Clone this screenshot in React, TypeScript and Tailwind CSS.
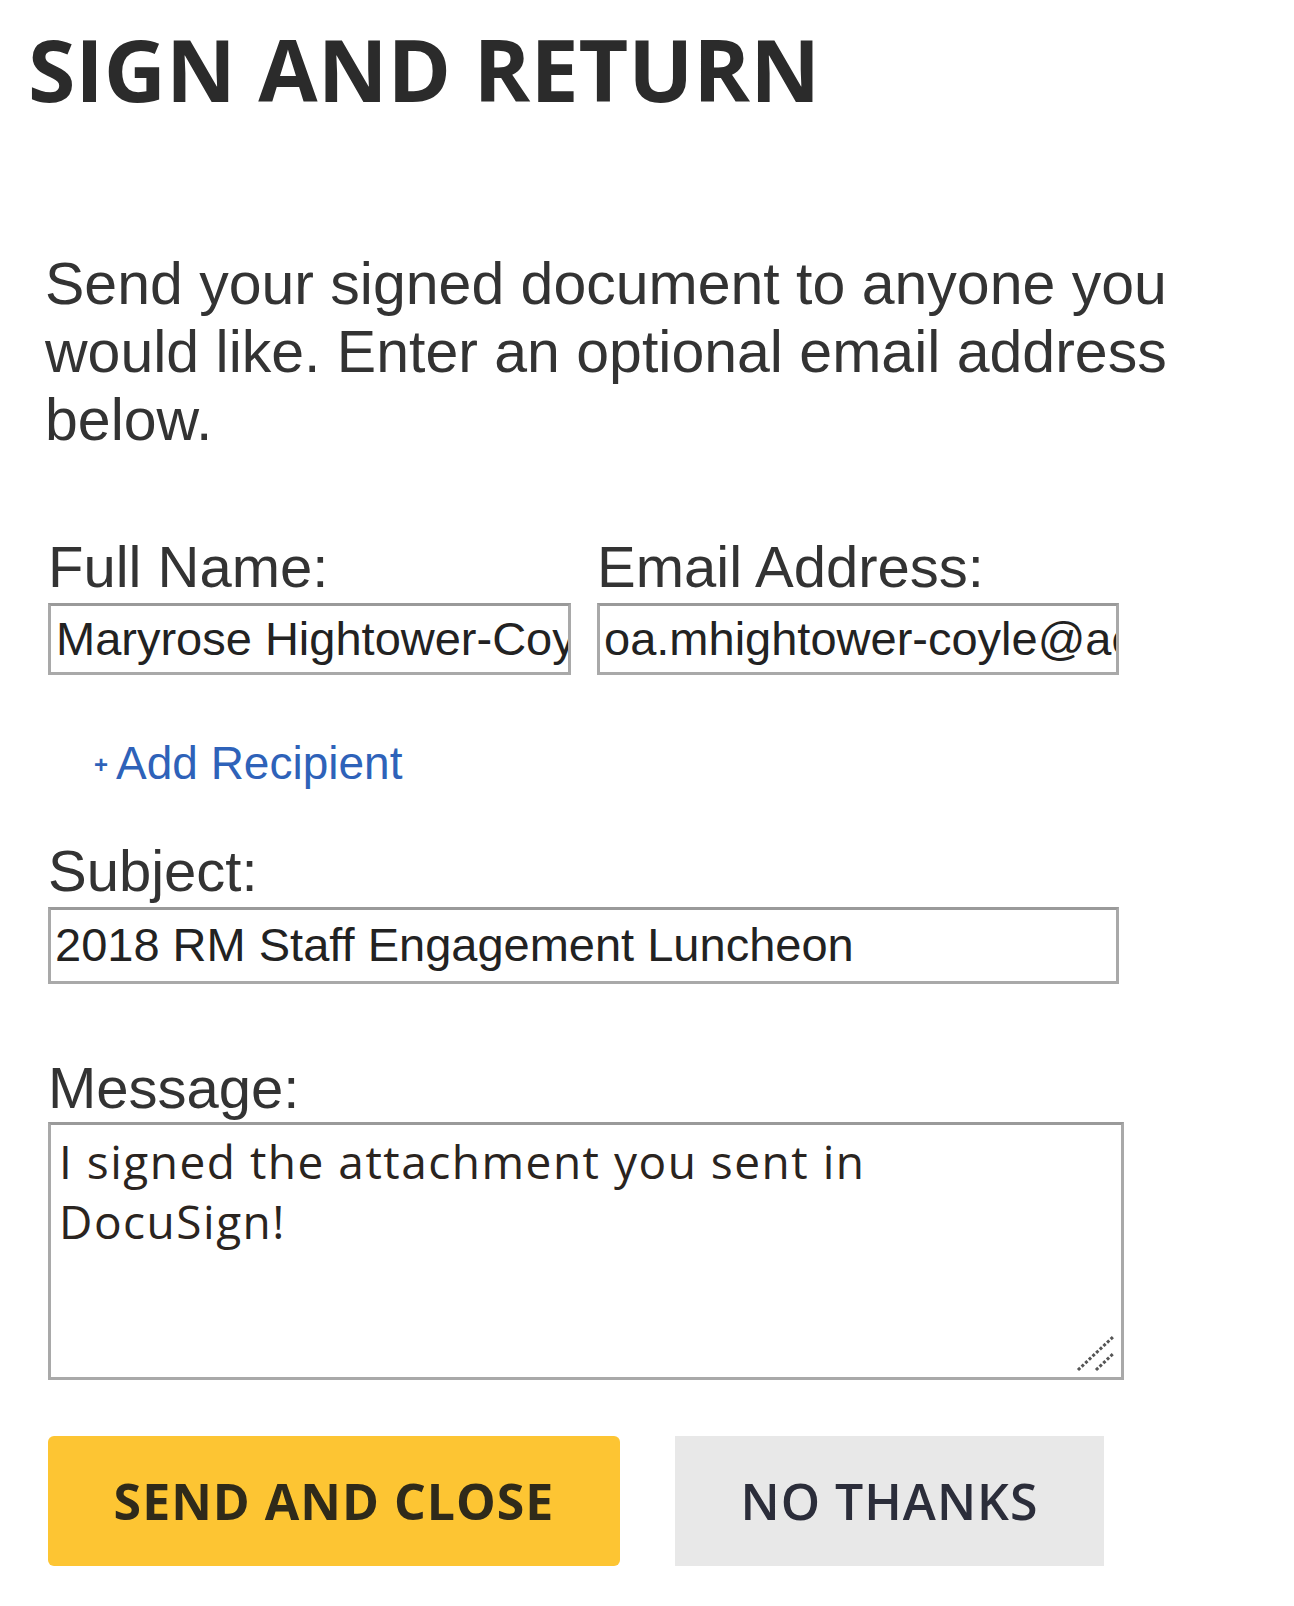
import React from "react";

const label = "text-[58px] leading-[64px] text-[#333333] font-['Liberation_Sans',Arial,sans-serif]";
const field =
  "border-[3px] border-[#a9a9a9] border-t-[#9a9a9a] bg-white overflow-hidden whitespace-nowrap text-[47px] text-[#222] font-['Liberation_Sans',Arial,sans-serif] flex items-center";

export default function App() {
  return (
    <div className="min-h-[1606px] w-[1294px] bg-white px-[48px] pt-[19px] flex flex-col">
      <h1 className="-ml-[20px] text-[86px] leading-[100px] font-bold text-[#2b2b2b] font-['Open_Sans',sans-serif]">
        SIGN AND RETURN
      </h1>

      <p className="mt-[131px] -ml-[3px] w-[1200px] text-[59px] leading-[68px] text-[#333333] font-['Liberation_Sans',Arial,sans-serif]">
        Send your signed document to anyone you
        <br />
        would like. Enter an optional email address
        <br />
        below.
      </p>

      <div className="mt-[81px] grid grid-cols-[523px_522px] gap-x-[26px]">
        <div className="flex flex-col">
          <span className={label}>Full Name:</span>
          <div className={`${field} mt-[4px] h-[72px] pl-[5px]`}>Maryrose Hightower-Coyle</div>
        </div>
        <div className="flex flex-col">
          <span className={label}>Email Address:</span>
          <div className={`${field} mt-[4px] h-[72px] pl-[4px]`}>oa.mhightower-coyle@aol.com</div>
        </div>
      </div>

      <a className="mt-[62px] ml-[46px] flex items-center gap-[8px] text-[46px] leading-[52px] text-[#2e62b9] font-['Liberation_Sans',Arial,sans-serif] cursor-pointer">
        <span className="text-[24px] leading-none font-bold mt-[4px]">+</span>
        <span>Add Recipient</span>
      </a>

      <div className="mt-[50px] flex flex-col w-[1071px]">
        <span className={label}>Subject:</span>
        <div className={`${field} mt-[4px] h-[77px] pl-[4px]`}>2018 RM Staff Engagement Luncheon</div>
      </div>

      <div className="mt-[72px] flex flex-col w-[1076px]">
        <span className={label}>Message:</span>
        <div className="relative mt-[2px] h-[258px] border-[3px] border-[#a9a9a9] border-t-[#9a9a9a] bg-white">
          <div className="pt-[6px] pl-[8px] pr-[200px] text-[46px] leading-[60px] tracking-[1.5px] text-[#2a2420] font-['Open_Sans',sans-serif]">
            I signed the attachment you sent in DocuSign!
          </div>
          <svg className="absolute right-[3px] bottom-[3px]" width="44" height="44" viewBox="0 0 44 44">
            <line x1="4" y1="40" x2="40" y2="6" stroke="#555" strokeWidth="3" strokeDasharray="3 2" />
            <line x1="22" y1="40" x2="40" y2="23" stroke="#555" strokeWidth="3" strokeDasharray="3 2" />
          </svg>
        </div>
      </div>

      <div className="mt-[56px] flex gap-[55px]">
        <button className="w-[572px] h-[130px] rounded-[6px] bg-[#fdc533] text-[50px] font-bold tracking-[1px] text-[#2f2a1a] font-['Open_Sans',sans-serif]">
          SEND AND CLOSE
        </button>
        <button className="w-[429px] h-[130px] bg-[#e8e8e8] text-[50px] font-semibold tracking-[1px] text-[#2b2d3a] font-['Open_Sans',sans-serif]">
          NO THANKS
        </button>
      </div>
    </div>
  );
}
